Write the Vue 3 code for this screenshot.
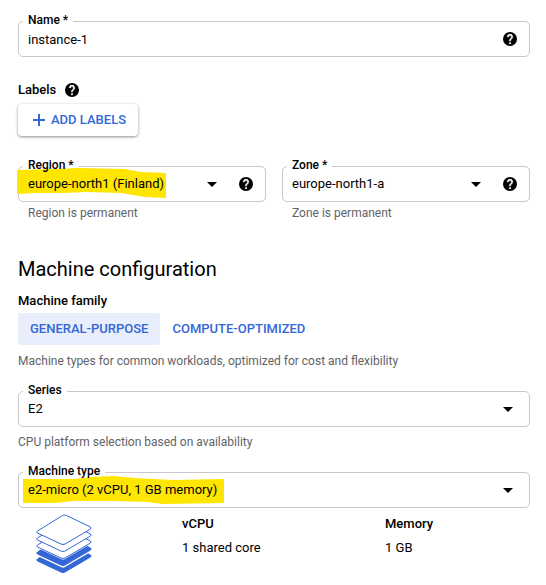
<script setup>
import { ref, h } from 'vue'

const name = ref('instance-1')
const family = ref('GENERAL-PURPOSE')
const families = ['GENERAL-PURPOSE', 'COMPUTE-OPTIMIZED']

const sheet = 'M1.500 17L26.500 1.500Q28.500 .5 30.500 1.500L54.500 13Q55.500 14 54.500 15L29 30Q27 31 25 30L1.500 19Q0 18 1.500 17Z'
const sheets = [
  { y: 28, fill: '#3367d6', stroke: '#3367d6' },
  { y: 23, fill: '#fff', stroke: 'none' },
  { y: 21, fill: '#3367d6', stroke: '#3367d6' },
  { y: 15, fill: '#fff', stroke: 'none' },
  { y: 14, fill: '#fff', stroke: '#3367d6' },
  { y: 7, fill: '#fff', stroke: '#3367d6' },
  { y: 0, fill: '#fff', stroke: '#3367d6' }
]

const HelpIcon = () =>
  h('svg', { viewBox: '2 2 20 20', width: 14, height: 14, 'aria-hidden': 'true' }, [
    h('circle', { cx: 12, cy: 12, r: 10, fill: '#000' }),
    h('path', {
      fill: '#fff',
      stroke: '#fff',
      'stroke-width': 0.6,
      d: 'M13 19h-2v-2h2v2zm2.07-7.75l-.9.92C13.45 12.9 13 13.5 13 15h-2v-.5c0-1.1.45-2.1 1.17-2.83l1.24-1.26c.37-.36.59-.86.59-1.41 0-1.1-.9-2-2-2s-2 .9-2 2H8c0-2.21 1.79-4 4-4s4 1.79 4 4c0 .88-.36 1.68-.93 2.25z'
    })
  ])
</script>

<template>
  <main class="page">
    <div class="field">
      <label class="field-label" for="name"><span>Name *</span></label>
      <input id="name" v-model="name" class="control" type="text" />
      <button class="help" type="button" aria-label="Name help"><HelpIcon /></button>
    </div>

    <section class="labels">
      <div class="labels-title">
        <span>Labels</span>
        <button class="help" type="button" aria-label="Labels help"><HelpIcon /></button>
      </div>
      <button class="add" type="button">
        <svg viewBox="0 0 12 12" width="12" height="12" aria-hidden="true">
          <path d="M6 0v12M0 6h12" stroke="#3367d6" stroke-width="2" />
        </svg>
        ADD LABELS
      </button>
    </section>

    <div class="location">
      <div>
        <div class="field">
          <label class="field-label" for="region"><span>Region *</span></label>
          <svg class="marker marker-region" viewBox="0 0 150 30" width="150" height="30" aria-hidden="true">
            <path d="M0 2L36 1L62 0L108 1L124 4L149 5V30L128 29L104 25L70 24L46 25L20 25L0 26Z" fill="#ffe600" />
          </svg>
          <select id="region" class="control"><option>europe-north1 (Finland)</option></select>
          <svg class="arrow" viewBox="0 0 10 5" width="10" height="5" aria-hidden="true"><path d="M0 0h10L5 5z" /></svg>
          <button class="help" type="button" aria-label="Region help"><HelpIcon /></button>
        </div>
        <p class="hint inset">Region is permanent</p>
      </div>
      <div>
        <div class="field">
          <label class="field-label" for="zone"><span>Zone *</span></label>
          <select id="zone" class="control"><option>europe-north1-a</option></select>
          <svg class="arrow" viewBox="0 0 10 5" width="10" height="5" aria-hidden="true"><path d="M0 0h10L5 5z" /></svg>
          <button class="help" type="button" aria-label="Zone help"><HelpIcon /></button>
        </div>
        <p class="hint inset">Zone is permanent</p>
      </div>
    </div>

    <h2>Machine configuration</h2>
    <h3>Machine family</h3>
    <div class="tabs" role="tablist">
      <button
        v-for="item in families"
        :key="item"
        class="tab"
        :class="{ active: item === family }"
        type="button"
        role="tab"
        :aria-selected="item === family"
        @click="family = item"
      >{{ item }}</button>
    </div>
    <p class="hint description">Machine types for common workloads, optimized for cost and flexibility</p>

    <div class="field">
      <label class="field-label" for="series"><span>Series</span></label>
      <select id="series" class="control"><option>E2</option></select>
      <svg class="arrow" viewBox="0 0 10 5" width="10" height="5" aria-hidden="true"><path d="M0 0h10L5 5z" /></svg>
    </div>
    <p class="hint platform">CPU platform selection based on availability</p>

    <div class="field">
      <label class="field-label" for="type"><span>Machine type</span></label>
      <svg class="marker marker-type" viewBox="0 0 201 28" width="201" height="28" aria-hidden="true">
        <path d="M0 3L50 3L68 1L90 0L112 2L150 4L201 3V27L140 28L124 26L90 25L50 25L32 27L0 27Z" fill="#ffe600" />
      </svg>
      <select id="type" class="control"><option>e2-micro (2 vCPU, 1 GB memory)</option></select>
      <svg class="arrow" viewBox="0 0 10 5" width="10" height="5" aria-hidden="true"><path d="M0 0h10L5 5z" /></svg>
    </div>

    <div class="summary">
      <svg class="stack" viewBox="0 0 56 62" width="56" height="62" aria-hidden="true">
        <path
          v-for="(s, i) in sheets"
          :key="i"
          :d="sheet"
          :fill="s.fill"
          :stroke="s.stroke"
          :transform="`translate(0 ${s.y})`"
        />
      </svg>
      <dl>
        <div><dt>vCPU</dt><dd>1 shared core</dd></div>
        <div><dt>Memory</dt><dd>1 GB</dd></div>
      </dl>
    </div>
  </main>
</template>

<style>
body {
  margin: 0;
  background: #fff;
}
</style>

<style scoped>
.page {
  padding: 21px 16px 8px 18px;
  font: 400 13px/20px Roboto, sans-serif;
  color: #000;
}
.field {
  position: relative;
  display: flex;
  align-items: center;
  box-sizing: border-box;
  height: 36px;
  padding-right: 12px;
  border: 1px solid #c8c8c8;
  border-radius: 5px;
}
.field-label {
  position: absolute;
  top: -10px;
  left: 4px;
  padding: 0 5px;
  background: #fff;
  font-size: 12px;
  font-weight: 500;
  line-height: 16px;
}
.field-label span {
  position: relative;
  z-index: 3;
}
.marker {
  position: absolute;
  z-index: 1;
}
.marker-region {
  top: 1px;
  left: -2px;
}
.marker-type {
  top: 3px;
  left: 4px;
}
.control {
  position: relative;
  z-index: 2;
  flex: 1;
  min-width: 0;
  height: 34px;
  margin: 0;
  padding: 0 9px;
  border: 0;
  outline: 0;
  background: transparent;
  color: inherit;
  font: inherit;
  appearance: none;
}
.arrow {
  margin-right: 4px;
  pointer-events: none;
}
.arrow + .help {
  margin-left: 18px;
}
.help {
  display: flex;
  padding: 0;
  border: 0;
  background: none;
}
.labels {
  margin-top: 23px;
}
.labels-title {
  display: flex;
  align-items: center;
  gap: 9px;
  height: 20px;
  font-weight: 500;
}
.add {
  display: flex;
  align-items: center;
  gap: 6px;
  height: 32px;
  margin-top: 4px;
  padding: 0 12px 0 15px;
  border: 0;
  border-radius: 4px;
  background: #fff;
  box-shadow: 0 1px 3px rgba(0, 0, 0, 0.45);
  color: #3367d6;
  font: 500 13px/20px Roboto, sans-serif;
}
.location {
  display: grid;
  grid-template-columns: 1fr 1fr;
  gap: 16px;
  margin-top: 30px;
}
p,
h2,
h3,
dl,
dd {
  margin: 0;
}
.hint {
  color: #5f6368;
  font-size: 12px;
  line-height: 20px;
}
.inset {
  margin-top: 1px;
  padding-left: 10px;
}
h2 {
  margin-top: 32px;
  font-size: 20px;
  font-weight: 400;
  line-height: 28px;
}
h3 {
  margin-top: 8px;
  font-size: 13px;
  font-weight: 500;
  line-height: 20px;
}
.tabs {
  display: flex;
  margin-top: 2px;
}
.tab {
  height: 32px;
  padding: 0 12px;
  border: 0;
  border-radius: 2px;
  background: transparent;
  color: #3367d6;
  font: 500 13px/20px Roboto, sans-serif;
}
.tab.active {
  background: #e8eefb;
}
.description {
  margin: 6px 0 20px;
}
.platform {
  margin: 5px 0 20px;
}
.summary {
  display: flex;
  align-items: flex-start;
  gap: 90px;
  padding: 6px 0 0 18px;
}
.stack {
  flex: none;
}
dl {
  display: grid;
  flex: 1;
  grid-template-columns: 203px 1fr;
}
dt {
  font-weight: 500;
  line-height: 20px;
}
dd {
  margin-top: 4px;
}
</style>
